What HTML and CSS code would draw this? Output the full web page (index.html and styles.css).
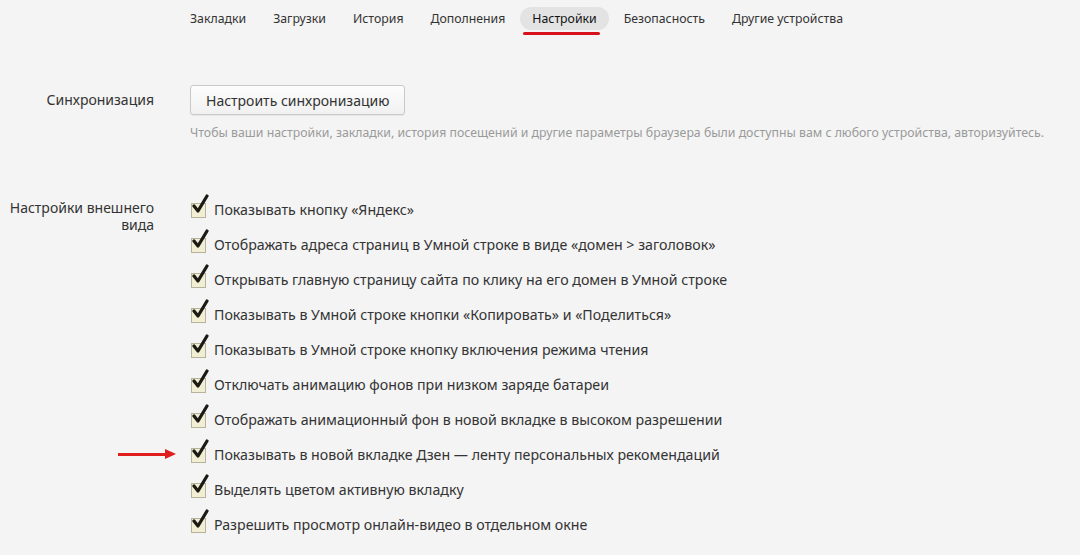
FILE: index.html
```html
<!DOCTYPE html>
<html lang="ru">
<head>
<meta charset="utf-8">
<link rel="stylesheet" href="styles.css">
</head>
<body>
<nav class="tabs">
  <a class="tab">Закладки</a>
  <a class="tab">Загрузки</a>
  <a class="tab">История</a>
  <a class="tab">Дополнения</a>
  <a class="tab active">Настройки</a>
  <a class="tab">Безопасность</a>
  <a class="tab">Другие устройства</a>
</nav>

<section class="section sync">
  <div class="label">Синхронизация</div>
  <div class="content">
    <button class="btn">Настроить синхронизацию</button>
    <p class="hint">Чтобы ваши настройки, закладки, история посещений и другие параметры браузера были доступны вам с любого устройства, авторизуйтесь.</p>
  </div>
</section>

<section class="section look">
  <div class="label">Настройки внешнего<br>вида</div>
  <ul class="content checks">
    <li class="check"><span class="box"><svg viewBox="0 0 20 22" width="20" height="22"><path d="M4 12 L8 17 L17 2" fill="none" stroke="#1c1a14" stroke-width="3.2" stroke-linecap="round" stroke-linejoin="round"/></svg></span>Показывать кнопку «Яндекс»</li>
    <li class="check"><span class="box"><svg viewBox="0 0 20 22" width="20" height="22"><path d="M4 12 L8 17 L17 2" fill="none" stroke="#1c1a14" stroke-width="3.2" stroke-linecap="round" stroke-linejoin="round"/></svg></span>Отображать адреса страниц в Умной строке в виде «домен &gt; заголовок»</li>
    <li class="check"><span class="box"><svg viewBox="0 0 20 22" width="20" height="22"><path d="M4 12 L8 17 L17 2" fill="none" stroke="#1c1a14" stroke-width="3.2" stroke-linecap="round" stroke-linejoin="round"/></svg></span>Открывать главную страницу сайта по клику на его домен в Умной строке</li>
    <li class="check"><span class="box"><svg viewBox="0 0 20 22" width="20" height="22"><path d="M4 12 L8 17 L17 2" fill="none" stroke="#1c1a14" stroke-width="3.2" stroke-linecap="round" stroke-linejoin="round"/></svg></span>Показывать в Умной строке кнопки «Копировать» и «Поделиться»</li>
    <li class="check"><span class="box"><svg viewBox="0 0 20 22" width="20" height="22"><path d="M4 12 L8 17 L17 2" fill="none" stroke="#1c1a14" stroke-width="3.2" stroke-linecap="round" stroke-linejoin="round"/></svg></span>Показывать в Умной строке кнопку включения режима чтения</li>
    <li class="check"><span class="box"><svg viewBox="0 0 20 22" width="20" height="22"><path d="M4 12 L8 17 L17 2" fill="none" stroke="#1c1a14" stroke-width="3.2" stroke-linecap="round" stroke-linejoin="round"/></svg></span>Отключать анимацию фонов при низком заряде батареи</li>
    <li class="check"><span class="box"><svg viewBox="0 0 20 22" width="20" height="22"><path d="M4 12 L8 17 L17 2" fill="none" stroke="#1c1a14" stroke-width="3.2" stroke-linecap="round" stroke-linejoin="round"/></svg></span>Отображать анимационный фон в новой вкладке в высоком разрешении</li>
    <li class="check marked"><span class="arrow"></span><span class="box"><svg viewBox="0 0 20 22" width="20" height="22"><path d="M4 12 L8 17 L17 2" fill="none" stroke="#1c1a14" stroke-width="3.2" stroke-linecap="round" stroke-linejoin="round"/></svg></span>Показывать в новой вкладке Дзен — ленту персональных рекомендаций</li>
    <li class="check"><span class="box"><svg viewBox="0 0 20 22" width="20" height="22"><path d="M4 12 L8 17 L17 2" fill="none" stroke="#1c1a14" stroke-width="3.2" stroke-linecap="round" stroke-linejoin="round"/></svg></span>Выделять цветом активную вкладку</li>
    <li class="check"><span class="box"><svg viewBox="0 0 20 22" width="20" height="22"><path d="M4 12 L8 17 L17 2" fill="none" stroke="#1c1a14" stroke-width="3.2" stroke-linecap="round" stroke-linejoin="round"/></svg></span>Разрешить просмотр онлайн-видео в отдельном окне</li>
  </ul>
</section>
</body>
</html>
```

FILE: styles.css
```css
* { box-sizing: border-box; }
html, body {
  margin: 0;
  padding: 0;
  background: #f4f4f4;
  font-family: "Segoe UI", "Noto Sans", "Open Sans", sans-serif;
  color: #333;
  overflow: hidden;
}
.tabs {
  display: flex;
  gap: 3px;
  padding: 7px 0 0 178px;
  height: 40px;
}
.tab {
  position: relative;
  font-size: 12.3px;
  line-height: 23px;
  height: 23px;
  padding: 0 12px;
  color: #333;
  border-radius: 12px;
  white-space: nowrap;
}
.tab.active {
  background: #e3e3e3;
  color: #111;
}
.tab.active::after {
  content: "";
  position: absolute;
  left: 3px;
  right: 9px;
  top: 25px;
  height: 3px;
  border-radius: 2px;
  background: #d8121a;
}
.section {
  display: flex;
  gap: 36px;
}
.label {
  width: 154px;
  flex: none;
  text-align: right;
  font-size: 14px;
  color: #333;
}
.content {
  flex: 1;
  min-width: 0;
}
.sync {
  margin-top: 45px;
}
.sync .label {
  line-height: 30px;
}
.btn {
  display: block;
  height: 30px;
  padding: 0 15px;
  font-family: inherit;
  font-size: 14px;
  color: #333;
  background: linear-gradient(#fdfdfd, #f1f1f1);
  border: 1px solid #c9c9c9;
  border-radius: 3px;
  box-shadow: 0 1px 1px rgba(0,0,0,0.06);
}
.hint {
  margin: 10px 0 0;
  font-size: 12.3px;
  line-height: 16px;
  color: #9a9a9a;
  white-space: nowrap;
}
.look {
  margin-top: 51px;
}
.look .label {
  line-height: 17px;
  padding-top: 7px;
}
.checks {
  list-style: none;
  margin: 0;
  padding: 0;
}
.check {
  position: relative;
  display: flex;
  align-items: center;
  height: 35px;
  font-size: 14.2px;
  color: #333;
  white-space: nowrap;
}
.box {
  position: relative;
  flex: none;
  width: 15px;
  height: 15px;
  margin: 1px 8px 0 1px;
  border: 1px solid #b6b29c;
  background: #f2eed4;
}
.box svg {
  position: absolute;
  left: -2px;
  top: -10px;
}
.arrow {
  position: absolute;
  left: -72px;
  top: 16px;
  width: 54px;
  height: 3px;
  background: #e01d1d;
}
.arrow::after {
  content: "";
  position: absolute;
  right: -4px;
  top: -4px;
  border-left: 11px solid #e01d1d;
  border-top: 5.5px solid transparent;
  border-bottom: 5.5px solid transparent;
}
```
